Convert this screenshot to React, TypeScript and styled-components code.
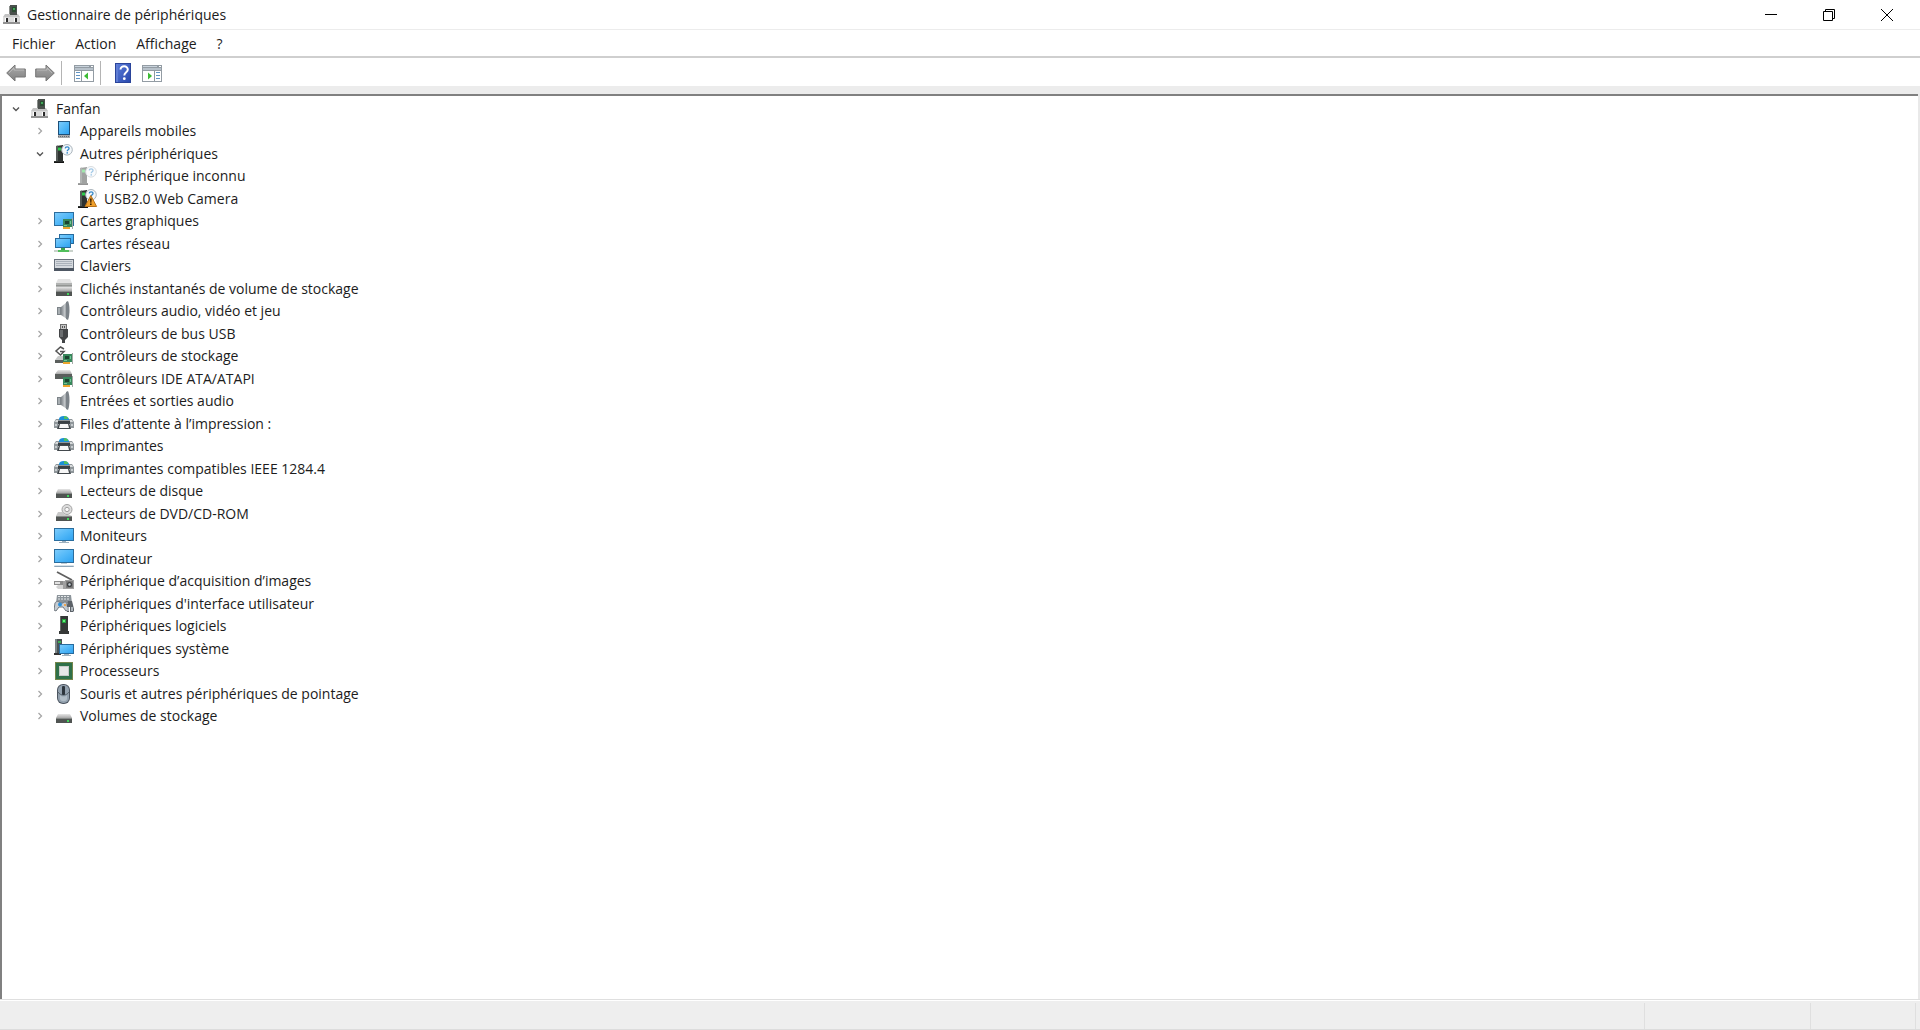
import React, { useState } from "react";
import styled, { createGlobalStyle } from "styled-components";

const GlobalStyle = createGlobalStyle`
  *, *::before, *::after { box-sizing: border-box; }
  body { margin: 0; background: #ffffff; }
  button { font: inherit; color: inherit; background: none; border: 0; padding: 0; }
`;

const Window = styled.main`
  display: flex;
  flex-direction: column;
  min-height: 100vh;
  background: #ffffff;
  color: #1c1c1c;
  font-family: "Open Sans", "Noto Sans", sans-serif;
  font-size: 14px;
  line-height: 20px;
`;

const TitleBar = styled.header`
  display: flex;
  align-items: center;
  height: 29px;
  padding: 0 4px 0 2px;
`;

const Title = styled.h1`
  flex: 1;
  margin: 0 0 0 5px;
  font-size: inherit;
  font-weight: 400;
`;

const WindowButton = styled.button`
  display: grid;
  place-items: center;
  width: 58px;
  height: 28px;
  &:hover { background: #e5e5e5; }
`;

const MenuBar = styled.nav`
  display: flex;
  align-items: center;
  height: 29px;
  padding: 2px 2px 0;
  border-top: 1px solid #ececec;
  border-bottom: 2px solid #cfcfcf;
`;

const MenuButton = styled.button`
  padding: 0 10px;
  &:hover { background: #e5f3ff; }
`;

const ToolBar = styled.div`
  display: flex;
  align-items: center;
  height: 28px;
  padding: 2px 1px 0;
`;

const ToolButton = styled.button`
  display: grid;
  place-items: center;
  width: 29px;
  height: 24px;
`;

const ToolDivider = styled.span`
  width: 1px;
  height: 24px;
  margin: 0 7px 0 2px;
  background: #b4b4b4;
`;

const Gutter = styled.div`
  height: 8px;
  background: #ececec;
`;

const TreePane = styled.section`
  flex: 1;
  margin-right: 2px;
  border: solid #808080;
  border-width: 2px 0 0 2px;
  box-shadow: 2px 0 0 #e9e9e9;
`;

const TreeList = styled.ul`
  display: grid;
  grid-auto-rows: 22px 23px;
  align-items: start;
  margin: 0;
  padding: 2px 0 0 6px;
  list-style: none;
`;

const Row = styled.li<{ $level: number }>`
  display: flex;
  align-items: center;
  gap: 6px;
  height: 22px;
  padding-left: ${(p) => p.$level * 24}px;
  white-space: nowrap;
`;

const Expander = styled.button`
  display: grid;
  place-items: center;
  width: 16px;
  height: 20px;
`;

const ExpanderSpace = styled.span`
  width: 16px;
`;

const StatusBar = styled.footer`
  display: flex;
  height: 31px;
  padding: 3px 4px 0 0;
  background: #eeeeee;
  border-top: 1px solid #dfdfdf;
  border-bottom: 1px solid #dcdcdc;
  box-shadow: inset 0 1px 0 #ffffff;
`;

const StatusCell = styled.span<{ $width?: number }>`
  flex: ${(p) => (p.$width ? `0 0 ${p.$width}px` : "1")};
  border-right: 1px solid #dfdfdf;
`;

const Defs = styled.svg`
  position: absolute;
`;

const Svg = ({ children }: { children: React.ReactNode }) => (
  <svg width={20} height={20} viewBox="0 0 20 20" aria-hidden="true">{children}</svg>
);

const Gradients = () => (
  <Defs width="0" height="0" aria-hidden="true">
    <defs>
      <linearGradient id="screen" x1="0" y1="0" x2="1" y2="1">
        <stop offset="0" stopColor="#7ccbfb" /><stop offset="0.5" stopColor="#52b8f8" /><stop offset="1" stopColor="#2fa2f0" />
      </linearGradient>
      <linearGradient id="metal" x1="0" y1="0" x2="0" y2="1">
        <stop offset="0" stopColor="#e6e6e6" /><stop offset="1" stopColor="#a8a8a8" />
      </linearGradient>
      <linearGradient id="cone" x1="0" y1="0" x2="1" y2="0">
        <stop offset="0" stopColor="#7b8186" /><stop offset="0.6" stopColor="#c2c6c9" /><stop offset="1" stopColor="#868b8f" />
      </linearGradient>
      <linearGradient id="help" x1="0" y1="0" x2="1" y2="1">
        <stop offset="0" stopColor="#5678d6" /><stop offset="1" stopColor="#2948ad" />
      </linearGradient>
      <linearGradient id="arrow" x1="0" y1="0" x2="0" y2="1">
        <stop offset="0" stopColor="#ababab" /><stop offset="1" stopColor="#808080" />
      </linearGradient>
    </defs>
  </Defs>
);

const ComputerIcon = () => (
  <Svg>
    <path d="M8 0h7v11H8z" fill="#4a504c" /><path d="M7 1h1v10H7z" fill="#8b8f8c" />
    <path d="M10 2h4v5h-4z" fill="#2c4b33" /><path d="M11 3h2v2h-2z" fill="#41a858" />
    <path d="M3 9h5v1h7V9h1l2 3v7H1v-7z" fill="#c4c4c4" /><path d="M1 12h17v5H1z" fill="#dcdcdc" /><path d="M1 17h17v2H1z" fill="#929292" />
    <path d="M4 13h2v4H4zM13 13h2v4h-2z" fill="#2b2b2b" /><path d="M3 13h1v4H3zM12 13h1v4h-1z" fill="#ffffff" />
  </Svg>
);
const MobileIcon = () => (
  <Svg>
    <path d="M4 0h12v14H4z" fill="#1d4f78" /><path d="M5 1h10v12H5z" fill="url(#screen)" />
    <path d="M4 14h12v3H4z" fill="#a6a9ac" /><path d="M4 15.500h12" stroke="#666a6e" strokeDasharray="1 1" />
  </Svg>
);
const Tower = () => (
  <>
    <path d="M2 2l7-1v16h1v2H0v-2h2z" fill="#2f3331" /><path d="M2 2l2-.5V17H2z" fill="#555b58" />
    <path d="M4 3.500h3v3H4z" fill="#2ecb4c" /><path d="M0 18h10v1H0z" fill="#151515" />
  </>
);
const QuestionBadge = () => (
  <>
    <circle cx="13" cy="5.800" r="5.300" fill="#f4f8fb" stroke="#aab4bb" />
    <path d="M11.200 4.400c.2-2.200 3.900-2.100 3.800.1 0 1.300-1.800 1.300-1.800 2.800" fill="none" stroke="#3488c9" strokeWidth="1.300" />
    <circle cx="13.200" cy="8.900" r=".8" fill="#3488c9" />
  </>
);
const OtherIcon = () => <Svg><Tower /><QuestionBadge /></Svg>;
const UnknownIcon = () => <Svg><g opacity=".45"><Tower /><QuestionBadge /></g></Svg>;
const WarningIcon = () => (
  <Svg>
    <Tower /><QuestionBadge />
    <path d="M12.800 6.500L18.600 17.500H7z" fill="#f0a02b" stroke="#b8711a" strokeLinejoin="round" />
    <path d="M12 9.500h1.700l-.3 4.200h-1.100zM12 14.500h1.600v1.600H12z" fill="#3b2203" />
  </Svg>
);
const Board = () => (
  <>
    <path d="M9 8h9v8H9z" fill="#37875b" /><path d="M18 7h1v11h-1z" fill="#a4aaa7" />
    <path d="M11 10h4v3h-4z" fill="#1c4430" /><path d="M16 10h1v3h-1zM10 14h3v1h-3z" fill="#71c496" />
    <path d="M9 16h7v2H9z" fill="#eba52f" />
  </>
);
const DisplayIcon = () => (
  <Svg><path d="M0 1h20v14H0z" fill="#2b6d9d" /><path d="M1 2h18v12H1z" fill="url(#screen)" /><Board /></Svg>
);
const NetworkIcon = () => (
  <Svg>
    <path d="M5 0h15v10H5z" fill="#286b9d" /><path d="M6 1h13v8H6z" fill="url(#screen)" />
    <path d="M1 4h16v10H1z" fill="#286b9d" /><path d="M2 5h14v8H2z" fill="url(#screen)" />
    <path d="M7 14h4v2H7z" fill="#3da34c" /><path d="M4 16h11v2H4z" fill="#51bf5b" /><path d="M0 16h4v2H0zM15 16h4v2h-4z" fill="#c9d2cb" />
  </Svg>
);
const KeyboardIcon = () => (
  <Svg>
    <path d="M0 3h20v12H0z" fill="#6b737e" /><path d="M1 4h18v8H1z" fill="#d5d9de" />
    <path d="M2 5.500h16M2 7.500h16M2 9.500h16" stroke="#aab1ba" /><path d="M0 12h20v3H0z" fill="#4e5763" />
  </Svg>
);
const DriveBase = () => (
  <>
    <path d="M2 12h16v5H2z" fill="#505452" /><path d="M2 12h16v1H2z" fill="#868a88" />
    <path d="M13 14h2v2h-2z" fill="#41d55c" />
  </>
);
const DiskIcon = () => <Svg><path d="M4 8h12l2 4H2z" fill="url(#metal)" /><DriveBase /></Svg>;
const ShadowIcon = () => (
  <Svg>
    <path d="M4 0h12l2 4H2z" fill="#e2e2e2" /><path d="M2 4h16v4H2z" fill="#b1b3b2" /><path d="M2 6h16v1H2z" fill="#929492" />
    <path d="M2 8h16v4H2z" fill="url(#metal)" /><DriveBase />
  </Svg>
);
const SpeakerIcon = () => (
  <Svg>
    <path d="M3 6h4v8H3z" fill="#7c8388" /><path d="M7 6l6-5v17l-6-4z" fill="url(#cone)" />
    <path d="M12 1l2-1c2 4 2 14 0 19l-2-1z" fill="#7b8288" /><path d="M4 7h2v6H4z" fill="#a8aeb2" />
  </Svg>
);
const UsbIcon = () => (
  <Svg>
    <path d="M6 0h7v5H6z" fill="#6f6f6f" /><path d="M7 1h5v4H7z" fill="#c6c6c6" /><path d="M8 2h1v2H8zM10 2h1v2h-1z" fill="#555" />
    <path d="M5 5h9v8l-3 3v3H8v-3l-3-3z" fill="#434547" /><path d="M6 6h3v7H6z" fill="#6b6e70" />
  </Svg>
);
const StorageIcon = () => (
  <Svg>
    <path d="M10 3L6.500 1 2 5l4.500 4L10 5.500H6" fill="none" stroke="#555" strokeWidth="1.500" />
    <path d="M4 10h5v4H1z" fill="#c8cac9" /><path d="M1 14h9v3H1z" fill="#5b5f5d" /><Board />
  </Svg>
);
const IdeIcon = () => (
  <Svg>
    <path d="M4 1h12l2 4H1z" fill="url(#metal)" /><path d="M1 5h17v5H1z" fill="#5a5e5c" /><Board />
  </Svg>
);
const PrinterIcon = () => (
  <Svg>
    <path d="M5 5c0-4 9-4 10 0v1H5z" fill="#1b8fd6" /><path d="M10 2c3 0 4 1 4 3h-4z" fill="#4fbe62" />
    <path d="M2 5h3v1h10V5h3l2 3v6h-4V9H4v5H0V8z" fill="#8f969a" /><path d="M2 6h2v2H1zM16 6h2l1 2h-3z" fill="#d7dadb" />
    <path d="M4 7h12v3H4z" fill="#3a4044" /><path d="M5 9h10l2 6H3z" fill="#43494d" /><path d="M6 10h8l1 4H5z" fill="#f7f7f7" />
    <path d="M1 10h2v2H1zM17 10h2v2h-2z" fill="#c6cbce" />
  </Svg>
);
const DiscIcon = () => (
  <Svg>
    <circle cx="13" cy="5.500" r="5" fill="#dedede" stroke="#a3a3a3" /><circle cx="13" cy="5.500" r="2.200" fill="#f7f7f7" stroke="#a0a0a0" />
    <path d="M4 8h5l2 3h5l2 1H2z" fill="#c8c8c8" /><DriveBase />
  </Svg>
);
const MonitorIcon = () => (
  <Svg>
    <path d="M0 2h20v13H0z" fill="#2b6d9d" /><path d="M1 3h18v11H1z" fill="url(#screen)" /><path d="M8 15h4v1h3v1H5v-1h3z" fill="#9db0be" />
  </Svg>
);
const DesktopIcon = () => (
  <Svg>
    <path d="M0 0h20v14H0z" fill="#2b6d9d" /><path d="M1 1h18v12H1z" fill="url(#screen)" />
    <path d="M7 14h6v1H7z" fill="#c1ccd4" /><path d="M1 16h18l1 2H0z" fill="#8ea5b6" /><path d="M1 16h18v1H1z" fill="#d8e2e9" />
  </Svg>
);
const ScannerIcon = () => (
  <Svg>
    <path d="M3 1l15 8" stroke="#5f5f5f" strokeWidth="1.800" />
    <path d="M0 10h9v4H0z" fill="#8a8a8a" /><path d="M1 11h5v2H1z" fill="#e2e2e2" /><path d="M4 14h6v4H4l-2-2z" fill="#d2d2d2" />
    <path d="M11 9h9v9h-9zM9 10h2v8H9z" fill="#a0a0a0" /><path d="M12 10h7v7h-7z" fill="#7c7c7c" /><circle cx="15.500" cy="13.500" r="2.600" fill="#3e4043" /><circle cx="15.500" cy="13.500" r="1.200" fill="#c3ccd3" />
  </Svg>
);
const HidIcon = () => (
  <Svg>
    <path d="M3 1h14l1 8H2z" fill="#8c949a" /><path d="M4 2.500h12M4 5h12" stroke="#e5e8ea" strokeDasharray="2 1" />
    <path d="M1 9c1-2 4-2 5 0h3c2-2 4-1 4 2l1 5-2 1-3-4H5l-3 4-2-1z" fill="#c6ccd1" stroke="#717980" />
    <circle cx="6" cy="10.500" r="2" fill="#2c91dc" /><path d="M10 10h2v2h-2z" fill="#eaa653" />
    <path d="M14 7h4l2 8v2l-1 1h-3v-5h-1v5h-2v-7z" fill="#5c6268" /><path d="M13 13h2v4h-2zM17 13h2v4h-2z" fill="#adb4ba" />
  </Svg>
);
const SoftwareIcon = () => (
  <Svg><path d="M6 0h8v15h1v3H5v-3h1z" fill="#363938" /><path d="M6 0h1v15H6z" fill="#676b69" /><path d="M8 3h4v4H8z" fill="#24a23c" /><path d="M9 4h2v2H9z" fill="#65f07d" /></Svg>
);
const SystemIcon = () => (
  <Svg>
    <path d="M1 0h7v15H1z" fill="#4b5355" /><path d="M1 0h2v15H1z" fill="#7b8587" /><path d="M4 2h3v2H4z" fill="#3eae55" /><path d="M0 14h7v2H0z" fill="#333" />
    <path d="M5 5h15v10H5z" fill="#286b9d" /><path d="M6 6h13v8H6z" fill="url(#screen)" /><path d="M10 15h5v1h2v1H8v-1h2z" fill="#9fb1be" />
  </Svg>
);
const CpuIcon = () => (
  <Svg>
    <path d="M1 1h18v18H1z" fill="#2f7049" /><path d="M1.500 1.500h17v17h-17z" fill="none" stroke="#b99d4e" strokeDasharray="1 1" />
    <path d="M5 5h10v10H5z" fill="#c7cac8" /><path d="M6 6h8v8H6z" fill="#e6e7e6" />
  </Svg>
);
const MouseIcon = () => (
  <Svg>
    <rect x="3" y="0" width="13" height="20" rx="6" fill="#4c5560" /><rect x="4" y="1" width="11" height="18" rx="5" fill="#93a1ae" />
    <path d="M6 11c2 2 5 2 7 0v4c-1 3-6 3-7 0z" fill="#b1bdc7" /><path d="M4 8c2 4 9 4 11 0" fill="none" stroke="#56616b" /><rect x="8" y="2" width="3" height="9" rx="1" fill="#2c343c" />
  </Svg>
);

const ArrowIcon = ({ forward }: { forward?: boolean }) => (
  <Svg>
    <g transform={forward ? "translate(20 0) scale(-1 1)" : undefined}>
      <path d="M.7 10L9 2v4h10.300v8H9v4z" fill="url(#arrow)" stroke="#777" /><path d="M3 10l5-5v2h10" fill="none" stroke="#c4c4c4" strokeWidth=".7" />
    </g>
  </Svg>
);
const PaneIcon = ({ right }: { right?: boolean }) => (
  <Svg>
    <path d="M0 2h20v17H0z" fill="#939ca4" /><path d="M1 5h18v2H1z" fill="#b7c1ca" /><path d="M1 3h14v1H1z" fill="#c9d3dc" /><path d="M17 3h2v1h-2z" fill="#fff" />
    <path d="M1 8h18v10H1z" fill="#fff" />
    <g transform={right ? "translate(20 0) scale(-1 1)" : undefined}>
      <path d="M7 8h1v10H7z" fill="#8d98a1" /><path d="M2 9.500h4M2 12.500h4M2 15.500h4" stroke="#6094c4" /><path d="M14 9.500v7L10 13z" fill="#3dbb35" />
    </g>
  </Svg>
);
const HelpIcon = () => (
  <Svg>
    <path d="M2 0h16v20H2z" fill="#2a449a" /><path d="M5 1h12v18H5z" fill="url(#help)" /><path d="M3 1h2v18H3z" fill="#5f7dd4" />
    <path d="M7.500 6.500c0-4.500 7.500-4 7.300 0 0 2.700-3.500 2.700-3.500 6" fill="none" stroke="#fff" strokeWidth="2" /><circle cx="11.300" cy="15.700" r="1.400" fill="#fff" />
  </Svg>
);
const Chevron = ({ open }: { open?: boolean }) => (
  <svg width="10" height="10" viewBox="0 0 10 10" fill="none" aria-hidden="true">
    {open ? <path d="M2 3.500L5 6.500l3-3" stroke="#555" strokeWidth="1.400" /> : <path d="M3.500 2L6.500 5l-3 3" stroke="#a6a6a6" strokeWidth="1.300" />}
  </svg>
);

type Item = { label: string; icon: React.FC; level: number };
const items: Item[] = [
  { label: "Fanfan", icon: ComputerIcon, level: 0 },
  { label: "Appareils mobiles", icon: MobileIcon, level: 1 },
  { label: "Autres périphériques", icon: OtherIcon, level: 1 },
  { label: "Périphérique inconnu", icon: UnknownIcon, level: 2 },
  { label: "USB2.0 Web Camera", icon: WarningIcon, level: 2 },
  { label: "Cartes graphiques", icon: DisplayIcon, level: 1 },
  { label: "Cartes réseau", icon: NetworkIcon, level: 1 },
  { label: "Claviers", icon: KeyboardIcon, level: 1 },
  { label: "Clichés instantanés de volume de stockage", icon: ShadowIcon, level: 1 },
  { label: "Contrôleurs audio, vidéo et jeu", icon: SpeakerIcon, level: 1 },
  { label: "Contrôleurs de bus USB", icon: UsbIcon, level: 1 },
  { label: "Contrôleurs de stockage", icon: StorageIcon, level: 1 },
  { label: "Contrôleurs IDE ATA/ATAPI", icon: IdeIcon, level: 1 },
  { label: "Entrées et sorties audio", icon: SpeakerIcon, level: 1 },
  { label: "Files d’attente à l’impression :", icon: PrinterIcon, level: 1 },
  { label: "Imprimantes", icon: PrinterIcon, level: 1 },
  { label: "Imprimantes compatibles IEEE 1284.4", icon: PrinterIcon, level: 1 },
  { label: "Lecteurs de disque", icon: DiskIcon, level: 1 },
  { label: "Lecteurs de DVD/CD-ROM", icon: DiscIcon, level: 1 },
  { label: "Moniteurs", icon: MonitorIcon, level: 1 },
  { label: "Ordinateur", icon: DesktopIcon, level: 1 },
  { label: "Périphérique d’acquisition d’images", icon: ScannerIcon, level: 1 },
  { label: "Périphériques d'interface utilisateur", icon: HidIcon, level: 1 },
  { label: "Périphériques logiciels", icon: SoftwareIcon, level: 1 },
  { label: "Périphériques système", icon: SystemIcon, level: 1 },
  { label: "Processeurs", icon: CpuIcon, level: 1 },
  { label: "Souris et autres périphériques de pointage", icon: MouseIcon, level: 1 },
  { label: "Volumes de stockage", icon: DiskIcon, level: 1 },
];

export default function App() {
  const [open, setOpen] = useState<Record<string, boolean>>({ "Fanfan": true, "Autres périphériques": true });
  const visible = items.filter(
    (item) => item.level === 0 || (open["Fanfan"] && (item.level === 1 || open["Autres périphériques"]))
  );
  return (
    <Window>
      <GlobalStyle />
      <Gradients />
      <TitleBar>
        <ComputerIcon />
        <Title>Gestionnaire de périphériques</Title>
        <WindowButton aria-label="Réduire">
          <svg width="12" height="12" viewBox="0 0 12 12"><path d="M0 5.500h12" stroke="#000" /></svg>
        </WindowButton>
        <WindowButton aria-label="Restaurer">
          <svg width="12" height="12" viewBox="0 0 12 12" fill="none" stroke="#000"><path d="M.5 2.500h9v9h-9zM2.500 2.500v-2h9v9h-2" /></svg>
        </WindowButton>
        <WindowButton aria-label="Fermer">
          <svg width="12" height="12" viewBox="0 0 12 12" stroke="#000"><path d="M0 0l12 12M12 0L0 12" /></svg>
        </WindowButton>
      </TitleBar>
      <MenuBar aria-label="Menu">
        {["Fichier", "Action", "Affichage", "?"].map((name) => <MenuButton key={name}>{name}</MenuButton>)}
      </MenuBar>
      <ToolBar role="toolbar">
        <ToolButton aria-label="Précédent"><ArrowIcon /></ToolButton>
        <ToolButton aria-label="Suivant"><ArrowIcon forward /></ToolButton>
        <ToolDivider />
        <ToolButton aria-label="Arborescence"><PaneIcon /></ToolButton>
        <ToolDivider />
        <ToolButton aria-label="Aide"><HelpIcon /></ToolButton>
        <ToolButton aria-label="Volet Actions"><PaneIcon right /></ToolButton>
      </ToolBar>
      <Gutter />
      <TreePane>
        <TreeList role="tree" aria-label="Périphériques">
          {visible.map(({ label, icon: Icon, level }) => (
            <Row key={label} role="treeitem" aria-level={level + 1} $level={level}>
              {level < 2 ? (
                <Expander aria-label={label} aria-expanded={!!open[label]} onClick={() => setOpen({ ...open, [label]: !open[label] })}>
                  <Chevron open={open[label]} />
                </Expander>
              ) : <ExpanderSpace />}
              <Icon />
              <span>{label}</span>
            </Row>
          ))}
        </TreeList>
      </TreePane>
      <StatusBar>
        <StatusCell />
        <StatusCell $width={166} />
        <StatusCell $width={105} />
      </StatusBar>
    </Window>
  );
}
